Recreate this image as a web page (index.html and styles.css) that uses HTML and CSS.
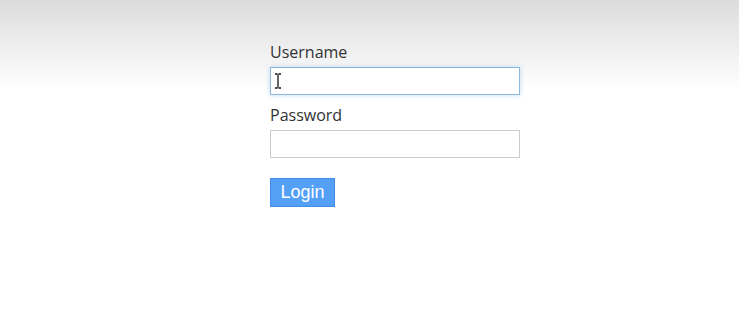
FILE: index.html
```html
<!DOCTYPE html>
<html lang="en">
<head>
<meta charset="utf-8">
<title>Login</title>
<link rel="stylesheet" href="styles.css">
</head>
<body>
<main class="page">
  <form class="login-form">
    <label class="field-label" for="username">Username</label>
    <div class="input-wrap">
      <input class="text-input is-focused" id="username" type="text">
      <svg class="ibeam" width="8" height="16" viewBox="0 0 8 16" aria-hidden="true">
        <path d="M1 1h2.5M4.5 1H7M4 1.5v13M1 15h2.5M4.5 15H7" stroke="#111" stroke-width="1.3" fill="none"/>
      </svg>
    </div>
    <label class="field-label" for="password">Password</label>
    <input class="text-input" id="password" type="password">
    <button class="login-btn" type="button">Login</button>
  </form>
</main>
</body>
</html>
```
FILE: styles.css
```css
html, body {
  margin: 0;
  padding: 0;
}
body {
  background: #fff linear-gradient(to bottom, #dcdcdc 0px, #ffffff 90px) no-repeat;
  background-size: 100% 90px;
  font-family: "Open Sans", "Noto Sans", sans-serif;
  color: #333;
  min-height: 333px;
}
.page {
  padding: 41px 0 0 270px;
}
.login-form {
  width: 250px;
  display: flex;
  flex-direction: column;
  align-items: flex-start;
}
.field-label {
  font-size: 16px;
  line-height: 22px;
  height: 22px;
  color: #333;
  margin-bottom: 4px;
}
.input-wrap {
  position: relative;
  width: 250px;
  margin-bottom: 9px;
}
.text-input {
  box-sizing: border-box;
  width: 250px;
  height: 28px;
  border: 1px solid #cccccc;
  background: #fff;
  margin: 0;
  padding: 0 6px;
  font-size: 14px;
  outline: none;
}
.text-input.is-focused {
  border-color: #8cb8e0;
  box-shadow: 0 0 5px rgba(120, 180, 230, 0.45);
}
.ibeam {
  position: absolute;
  left: 4px;
  top: 6px;
}
.login-btn {
  margin-top: 20px;
  box-sizing: border-box;
  width: 65px;
  height: 29px;
  padding: 0;
  border: 1px solid #3f8fe8;
  background: #54a0f7;
  color: #fff;
  font-family: "Liberation Sans", Arial, sans-serif;
  font-size: 18px;
  line-height: 27px;
  cursor: pointer;
}
```
